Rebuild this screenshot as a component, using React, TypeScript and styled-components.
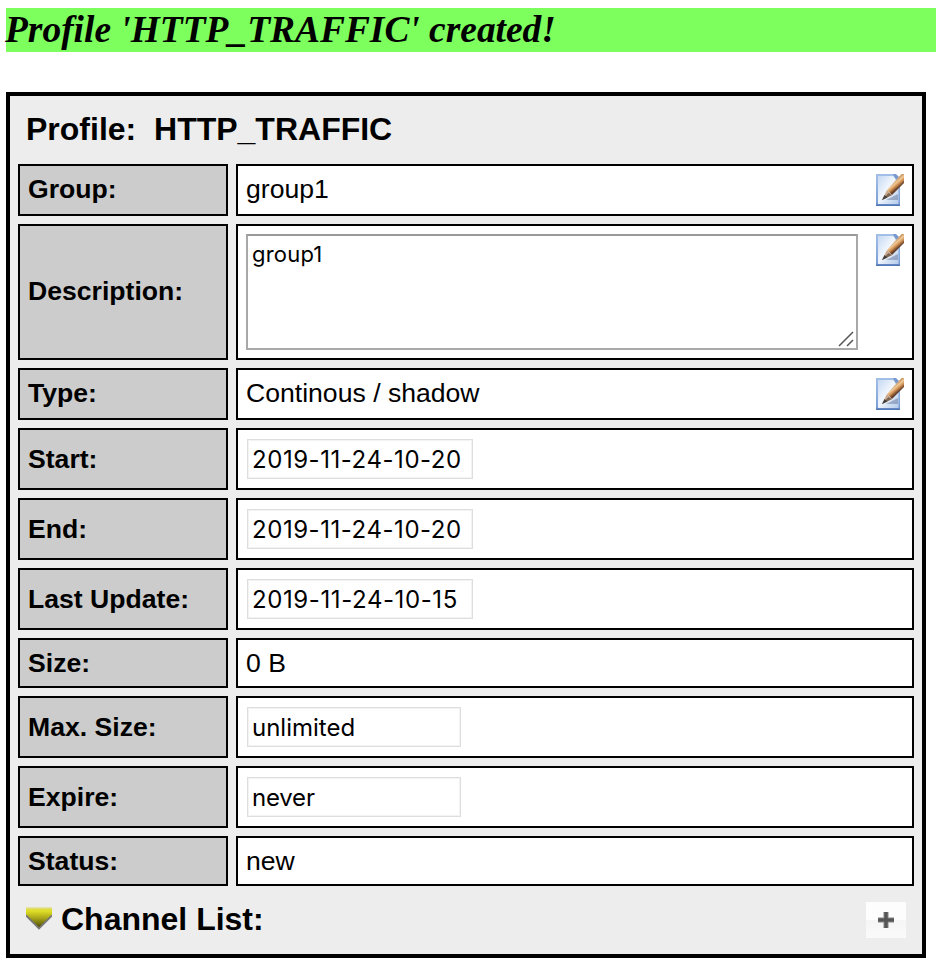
import React from "react";
import styled, { createGlobalStyle } from "styled-components";

const GlobalStyle = createGlobalStyle`
  *, *::before, *::after { box-sizing: border-box; }
  html, body { margin: 0; background: #fff; }
  body { color: #000; font-family: "Liberation Sans", Arial, sans-serif; overflow: hidden; }
`;

const Page = styled.main`
  padding: 8px 0 8px 6px;
  height: 966px;
`;

const Notice = styled.h3`
  margin: 0 0 40px;
  height: 44px;
  background: #7dff5e;
  font: italic bold 37.44px/44px "Liberation Serif", "Times New Roman", serif;
  text-indent: -1px;
  white-space: pre;
`;

const Panel = styled.section`
  width: 920px;
  height: 866px;
  border: 4px solid #000;
  background: #ededed;
  padding: 0 8px;
`;

const Heading = styled.h2`
  margin: 0;
  font-size: 32px;
  line-height: 36px;
  font-weight: bold;
  white-space: pre;
`;

const PanelHeader = styled.header`
  height: 68px;
  padding: 15px 8px 0;
`;

const Rows = styled.div`
  display: grid;
  row-gap: 8px;
`;

const Row = styled.div<{ $height: number }>`
  display: grid;
  grid-template-columns: 210px 678px;
  column-gap: 8px;
  height: ${(p) => p.$height}px;
`;

const Label = styled.div<{ $editable?: boolean }>`
  display: flex;
  align-items: center;
  border: 2px solid #000;
  background: #ccc;
  padding: 0 8px ${(p) => (p.$editable ? 2 : 1)}px;
  font-size: 26.6px;
  line-height: 30px;
  font-weight: bold;
`;

const Value = styled.div`
  display: flex;
  align-items: flex-start;
  justify-content: space-between;
  border: 2px solid #000;
  background: #fff;
  padding: 8px;
`;

const Text = styled.span`
  font-size: 26.6px;
  line-height: 30px;
  white-space: pre;
`;

const Field = styled.input<{ $width: number; $spacing: number }>`
  margin: 1px;
  width: ${(p) => p.$width}px;
  height: 40px;
  padding: 0 4px;
  border: 1px solid #dedede;
  border-radius: 0;
  box-shadow: inset 0 0 0 1px #f3f3f3;
  background: #fff;
  color: #000;
  font: 24px "Inter", sans-serif;
  letter-spacing: ${(p) => p.$spacing}px;
  outline: none;
`;

const DescriptionBox = styled.div`
  display: flex;
  justify-content: space-between;
  width: 612px;
  height: 116px;
  border: 2px solid #a9a9a9;
  border-top-color: #999;
  padding: 4px 1px 0 4px;
  font: 22px/28px "Inter", sans-serif;
  letter-spacing: 0.2px;
`;

const Grip = styled.svg`
  align-self: flex-end;
  width: 18px;
  height: 18px;
`;

const IconSvg = styled.svg`
  display: block;
  flex: none;
`;

const PanelFooter = styled.footer`
  display: flex;
  align-items: center;
  height: 68px;
  padding: 0 8px;
`;

const CollapseSvg = styled(IconSvg)`
  margin-bottom: 2px;
`;

const ChannelTitle = styled(Heading)`
  margin-left: 9px;
  padding-bottom: 2px;
`;

const AddButton = styled.button`
  display: flex;
  align-items: center;
  justify-content: center;
  width: 40px;
  height: 36px;
  margin-left: auto;
  padding: 0;
  border: 0;
  background: linear-gradient(#fdfdfd 0 50%, #f5f5f5 50%, #fafafa 100%);
`;

function EditIcon({ id }: { id: string }) {
  return (
    <IconSvg width="28" height="32" viewBox="0 0 28 32" role="img" aria-label="Edit">
      <defs>
        <linearGradient id={`${id}-page`} x1="0" y1="0" x2="1" y2="1">
          <stop offset="0" stopColor="#c6d9f3" />
          <stop offset=".45" stopColor="#f1f6fd" />
          <stop offset="1" stopColor="#b4cbeb" />
        </linearGradient>
        <linearGradient id={`${id}-edge`} x1="0" y1="0" x2="0" y2="1">
          <stop offset="0" stopColor="#a3c0e8" />
          <stop offset=".9" stopColor="#7c9fd6" />
          <stop offset="1" stopColor="#4c72b2" />
        </linearGradient>
        <linearGradient id={`${id}-wood`} gradientUnits="userSpaceOnUse" x1="18" y1="7" x2="23" y2="13">
          <stop offset="0" stopColor="#c99762" />
          <stop offset=".35" stopColor="#f0c898" />
          <stop offset=".65" stopColor="#d08e50" />
          <stop offset="1" stopColor="#65412b" />
        </linearGradient>
      </defs>
      <path d="M0 0H18L24 6V32H0Z" fill={`url(#${id}-edge)`} />
      <path d="M2 2H17L22.5 7V30H2Z" fill={`url(#${id}-page)`} />
      <path d="M17 0H20L23 3L20 6Z" fill="#7898ce" />
      <path d="M10 26L22 20V26Z" fill="#5a6d90" opacity=".45" />
      <path d="M25.5 0H28V9L16 21L11 16Z" fill={`url(#${id}-wood)`} />
      <path d="M11 16L16 21L6 26Z" fill="#c9aa90" />
      <path d="M16 21L12.5 19L6 26Z" fill="#7d6553" />
      <path d="M8.5 21L11.5 23.5L6 26Z" fill="#44403e" />
    </IconSvg>
  );
}

function CollapseIcon() {
  return (
    <CollapseSvg width="26" height="24" viewBox="0 0 26 24" aria-hidden="true">
      <defs>
        <linearGradient id="collapse" x1="0" y1="0" x2="0" y2="1">
          <stop offset="0" stopColor="#e6e5c8" />
          <stop offset=".1" stopColor="#dedc4c" />
          <stop offset=".2" stopColor="#dfdd24" />
          <stop offset=".55" stopColor="#a5a21a" />
          <stop offset="1" stopColor="#454500" />
        </linearGradient>
      </defs>
      <path d="M0 0H26V8L13 21L0 8Z" fill="url(#collapse)" />
      <path d="M0 8.5L13 21.5L26 8.5" fill="none" stroke="#777" strokeWidth="1.8" />
    </CollapseSvg>
  );
}

type Profile = {
  label: string;
  value: string;
  height: number;
  kind?: "field" | "description";
  editable?: boolean;
  width?: number;
  spacing?: number;
};

const profileRows: Profile[] = [
  { label: "Group:", value: "group1", height: 52, editable: true },
  { label: "Description:", value: "group1", height: 136, kind: "description", editable: true },
  { label: "Type:", value: "Continous / shadow", height: 52, editable: true },
  { label: "Start:", value: "2019-11-24-10-20", height: 62, kind: "field", width: 226, spacing: 0.55 },
  { label: "End:", value: "2019-11-24-10-20", height: 62, kind: "field", width: 226, spacing: 0.55 },
  { label: "Last Update:", value: "2019-11-24-10-15", height: 62, kind: "field", width: 226, spacing: 0.6 },
  { label: "Size:", value: "0 B", height: 50 },
  { label: "Max. Size:", value: "unlimited", height: 62, kind: "field", width: 214 },
  { label: "Expire:", value: "never", height: 62, kind: "field", width: 214, spacing: -0.2 },
  { label: "Status:", value: "new", height: 50 },
];

function RowValue({ row }: { row: Profile }) {
  if (row.kind === "field") {
    return <Field readOnly aria-label={row.label} value={row.value} $width={row.width ?? 214} $spacing={row.spacing ?? 0} />;
  }
  if (row.kind === "description") {
    return (
      <DescriptionBox>
        {row.value}
        <Grip viewBox="0 0 18 18" aria-hidden="true">
          <path d="M2 16L16 2M10 16L16 10" stroke="#555" strokeWidth="1.5" />
        </Grip>
      </DescriptionBox>
    );
  }
  return <Text>{row.value}</Text>;
}

export default function App() {
  return (
    <>
      <GlobalStyle />
      <Page>
        <Notice>Profile 'HTTP_TRAFFIC' created!</Notice>
        <Panel>
          <PanelHeader>
            <Heading>{"Profile:  HTTP_TRAFFIC"}</Heading>
          </PanelHeader>
          <Rows>
            {profileRows.map((row, index) => (
              <Row key={row.label} $height={row.height}>
                <Label $editable={row.editable}>{row.label}</Label>
                <Value>
                  <RowValue row={row} />
                  {row.editable && <EditIcon id={`edit-${index}`} />}
                </Value>
              </Row>
            ))}
          </Rows>
          <PanelFooter>
            <CollapseIcon />
            <ChannelTitle>Channel List:</ChannelTitle>
            <AddButton aria-label="Add channel">
              <IconSvg width="18" height="18" viewBox="0 0 18 18">
                <path d="M9 1V17M1 9H17" stroke="#aaa" strokeWidth="5.5" />
                <path d="M9 1V17M1 9H17" stroke="#555" strokeWidth="3.5" />
              </IconSvg>
            </AddButton>
          </PanelFooter>
        </Panel>
      </Page>
    </>
  );
}
